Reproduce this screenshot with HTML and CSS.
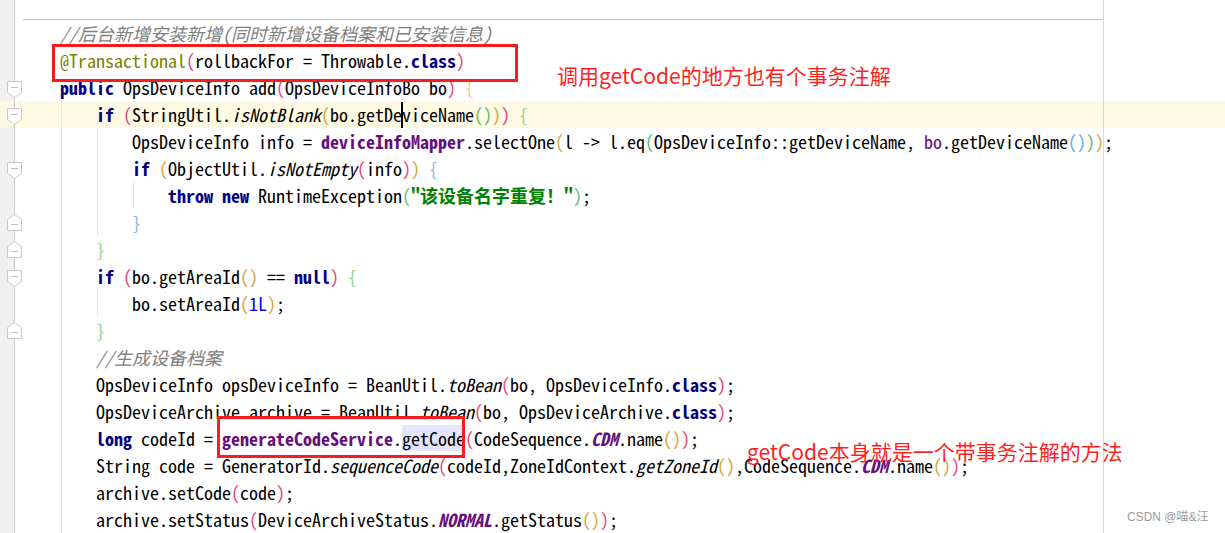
FILE: index.html
```html
<!DOCTYPE html>
<html lang="zh">
<head>
<meta charset="utf-8">
<title>Editor</title>
<link rel="stylesheet" href="styles.css">
</head>
<body>
<div class="editor">
  <div class="row top"><div class="gut"></div><div class="sep"></div></div>

  <div class="row"><div class="gut"></div><div class="code"><span class="cm">//后台新增安装新增(同时新增设备档案和已安装信息)</span></div></div>

  <div class="row"><div class="gut"></div><div class="code"><span class="an">@Transactional</span><span class="p1">(</span>rollbackFor = Throwable.<span class="kw">class</span><span class="p1">)</span></div></div>

  <div class="row"><div class="gut"><svg class="fold down" width="15" height="17" viewBox="0 0 15 17"><path d="M0.5 0.5H14.5V11.5L7.5 16.5L0.5 11.5Z" fill="#fff" stroke="#c9c9c9"/><path d="M4 6.5H11" stroke="#bdbdbd"/></svg></div><div class="code"><span class="kw">public</span> OpsDeviceInfo add<span class="p1">(</span>OpsDeviceInfoBo bo<span class="p1">)</span> <span class="b1">{</span></div></div>

  <div class="row cur"><div class="gut"><svg class="fold down" width="15" height="17" viewBox="0 0 15 17"><path d="M0.5 0.5H14.5V11.5L7.5 16.5L0.5 11.5Z" fill="#fff" stroke="#c9c9c9"/><path d="M4 6.5H11" stroke="#bdbdbd"/></svg></div><div class="code"><span class="ind g"></span><span class="kw">if</span> <span class="p1">(</span>StringUtil.<span class="sm">isNotBlank</span><span class="p2">(</span>bo.getDe<span class="caret"></span>viceName<span class="p3">()</span><span class="p2">)</span><span class="p1">)</span> <span class="b2">{</span></div></div>

  <div class="row"><div class="gut"></div><div class="code"><span class="ind g"></span><span class="ind gg"></span>OpsDeviceInfo info = <span class="fld">deviceInfoMapper</span>.selectOne<span class="p2">(</span>l -&gt; l.eq<span class="p3">(</span>OpsDeviceInfo::getDeviceName, <span class="cap">bo</span>.getDeviceName<span class="p4">()</span><span class="p3">)</span><span class="p2">)</span>;</div></div>

  <div class="row"><div class="gut"><svg class="fold down" width="15" height="17" viewBox="0 0 15 17"><path d="M0.5 0.5H14.5V11.5L7.5 16.5L0.5 11.5Z" fill="#fff" stroke="#c9c9c9"/><path d="M4 6.5H11" stroke="#bdbdbd"/></svg></div><div class="code"><span class="ind g"></span><span class="ind gg"></span><span class="kw">if</span> <span class="p2">(</span>ObjectUtil.<span class="sm">isNotEmpty</span><span class="p1">(</span>info<span class="p1">)</span><span class="p2">)</span> <span class="b3">{</span></div></div>

  <div class="row"><div class="gut"></div><div class="code"><span class="ind g"></span><span class="ind gg"></span><span class="ind g"></span><span class="kw">throw</span> <span class="kw">new</span> RuntimeException<span class="p3">(</span><span class="str">"该设备名字重复！"</span><span class="p3">)</span>;</div></div>

  <div class="row"><div class="gut"><svg class="fold up" width="15" height="17" viewBox="0 0 15 17"><path d="M0.5 16.5H14.5V5.5L7.5 0.5L0.5 5.5Z" fill="#fff" stroke="#c9c9c9"/><path d="M4 10.5H11" stroke="#bdbdbd"/></svg></div><div class="code"><span class="ind g"></span><span class="ind gg"></span><span class="b3">}</span></div></div>

  <div class="row"><div class="gut"><svg class="fold up" width="15" height="17" viewBox="0 0 15 17"><path d="M0.5 16.5H14.5V5.5L7.5 0.5L0.5 5.5Z" fill="#fff" stroke="#c9c9c9"/><path d="M4 10.5H11" stroke="#bdbdbd"/></svg></div><div class="code"><span class="ind g"></span><span class="b2">}</span></div></div>

  <div class="row"><div class="gut"><svg class="fold down" width="15" height="17" viewBox="0 0 15 17"><path d="M0.5 0.5H14.5V11.5L7.5 16.5L0.5 11.5Z" fill="#fff" stroke="#c9c9c9"/><path d="M4 6.5H11" stroke="#bdbdbd"/></svg></div><div class="code"><span class="ind g"></span><span class="kw">if</span> <span class="p1">(</span>bo.getAreaId<span class="p2">()</span> == <span class="kw">null</span><span class="p1">)</span> <span class="b2">{</span></div></div>

  <div class="row"><div class="gut"></div><div class="code"><span class="ind g"></span><span class="ind gg"></span>bo.setAreaId<span class="p2">(</span><span class="num">1L</span><span class="p2">)</span>;</div></div>

  <div class="row"><div class="gut"><svg class="fold up" width="15" height="17" viewBox="0 0 15 17"><path d="M0.5 16.5H14.5V5.5L7.5 0.5L0.5 5.5Z" fill="#fff" stroke="#c9c9c9"/><path d="M4 10.5H11" stroke="#bdbdbd"/></svg></div><div class="code"><span class="ind g"></span><span class="b2">}</span></div></div>

  <div class="row"><div class="gut"></div><div class="code"><span class="ind g"></span><span class="cm">//生成设备档案</span></div></div>

  <div class="row"><div class="gut"></div><div class="code"><span class="ind g"></span>OpsDeviceInfo opsDeviceInfo = BeanUtil.<span class="sm">toBean</span><span class="p1">(</span>bo, OpsDeviceInfo.<span class="kw">class</span><span class="p1">)</span>;</div></div>

  <div class="row"><div class="gut"></div><div class="code"><span class="ind g"></span>OpsDeviceArchive archive = BeanUtil.<span class="sm">toBean</span><span class="p1">(</span>bo, OpsDeviceArchive.<span class="kw">class</span><span class="p1">)</span>;</div></div>

  <div class="row"><div class="gut"></div><div class="code"><span class="ind g"></span><span class="kw">long</span> codeId = <span class="fld">generateCodeService</span>.<span class="usage">getCode</span><span class="p1">(</span>CodeSequence.<span class="sf">CDM</span>.name<span class="p2">()</span><span class="p1">)</span>;</div></div>

  <div class="row"><div class="gut"></div><div class="code"><span class="ind g"></span>String code = GeneratorId.<span class="sm">sequenceCode</span><span class="p1">(</span>codeId,ZoneIdContext.<span class="sm">getZoneId</span><span class="p2">()</span>,CodeSequence.<span class="sf">CDM</span>.name<span class="p2">()</span><span class="p1">)</span>;</div></div>

  <div class="row"><div class="gut"></div><div class="code"><span class="ind g"></span>archive.setCode<span class="p1">(</span>code<span class="p1">)</span>;</div></div>

  <div class="row"><div class="gut"></div><div class="code"><span class="ind g"></span>archive.setStatus<span class="p1">(</span>DeviceArchiveStatus.<span class="sf">NORMAL</span>.getStatus<span class="p2">()</span><span class="p1">)</span>;</div></div>

  <div class="margin-line"></div>
  <div class="box box-1"></div>
  <div class="box box-2"></div>
  <div class="note note-1">调用getCode的地方也有个事务注解</div>
  <div class="note note-2">getCode本身就是一个带事务注解的方法</div>
  <div class="mark">CSDN @喵&amp;汪</div>
</div>
</body>
</html>
```

FILE: styles.css
```css
html, body {
  margin: 0;
  padding: 0;
  background: #ffffff;
}

.editor {
  position: relative;
  width: 1225px;
  height: 533px;
  overflow: hidden;
  background: #ffffff;
  font-family: "Noto Sans Mono CJK SC", "Liberation Mono", monospace;
  font-size: 18px;
  color: #000000;
}

.row {
  display: flex;
  height: 27px;
  line-height: 27px;
}

.row.top {
  height: 20px;
}

.row.cur {
  background: #fffae3;
}

.gut {
  flex: none;
  width: 14px;
  border-right: 1px solid #cdcdcd;
  background: #f0f0f0;
}

.row.cur .gut {
  background: #fdf8e2;
}

.fold {
  display: block;
  margin-left: 7px;
  overflow: visible;
}

.fold.down {
  margin-top: 7px;
}

.fold.up {
  margin-top: 5px;
}

.sep {
  margin-left: 8px;
  width: 1080px;
  height: 19px;
  border-bottom: 1px solid #c4c4c4;
}

.code {
  flex: 1;
  padding-left: 45px;
  white-space: pre;
}

.ind {
  display: inline-block;
  width: 36px;
  height: 27px;
  vertical-align: top;
}

.ind.g {
  background: linear-gradient(to right, transparent 1px, #e4e4e4 1px, #e4e4e4 2px, transparent 2px);
}

.ind.gg {
  background: linear-gradient(to right, transparent 1px, #d9eed9 1px, #d9eed9 2px, transparent 2px);
}

.caret {
  position: relative;
  display: inline-block;
  width: 0;
  height: 27px;
  vertical-align: top;
}

.caret::after {
  content: "";
  position: absolute;
  left: -1px;
  top: 1px;
  width: 2px;
  height: 26px;
  background: #000000;
}

.kw { color: #000080; font-weight: bold; }
.an { color: #808000; }
.cm { color: #808080; font-style: italic; }
.str { color: #008000; font-weight: bold; }
.num { color: #0000ff; }
.fld { color: #660e7a; font-weight: bold; }
.sf { color: #660e7a; font-weight: bold; font-style: italic; }
.sm { font-style: italic; }
.cap { color: #660e7a; }
.usage { background: #e4e4ff; }

.p1 { color: #e2487a; }
.p2 { color: #d4a63e; }
.p3 { color: #5cbf78; }
.p4 { color: #6ea8e0; }
.b1 { color: #e3cf82; }
.b2 { color: #8fd48f; }
.b3 { color: #8db4e6; }

.margin-line {
  position: absolute;
  left: 1103px;
  top: 0;
  width: 1px;
  height: 533px;
  background: #d8d8d8;
}

.box {
  position: absolute;
  border: 3px solid #f81c1c;
  box-sizing: border-box;
}

.box-1 {
  left: 52px;
  top: 44px;
  width: 466px;
  height: 38px;
}

.box-2 {
  left: 217px;
  top: 416px;
  width: 248px;
  height: 42px;
}

.note {
  position: absolute;
  font-family: "Noto Sans CJK SC", sans-serif;
  font-size: 21px;
  line-height: 21px;
  color: #ff1f1f;
  white-space: nowrap;
}

.note-1 {
  left: 557px;
  top: 65px;
}

.note-2 {
  left: 747px;
  top: 441px;
}

.mark {
  position: absolute;
  left: 1127px;
  top: 509px;
  font-family: "Liberation Sans", "Noto Sans CJK SC", sans-serif;
  font-size: 12px;
  line-height: 16px;
  color: #9c9c9c;
  white-space: nowrap;
}
```
